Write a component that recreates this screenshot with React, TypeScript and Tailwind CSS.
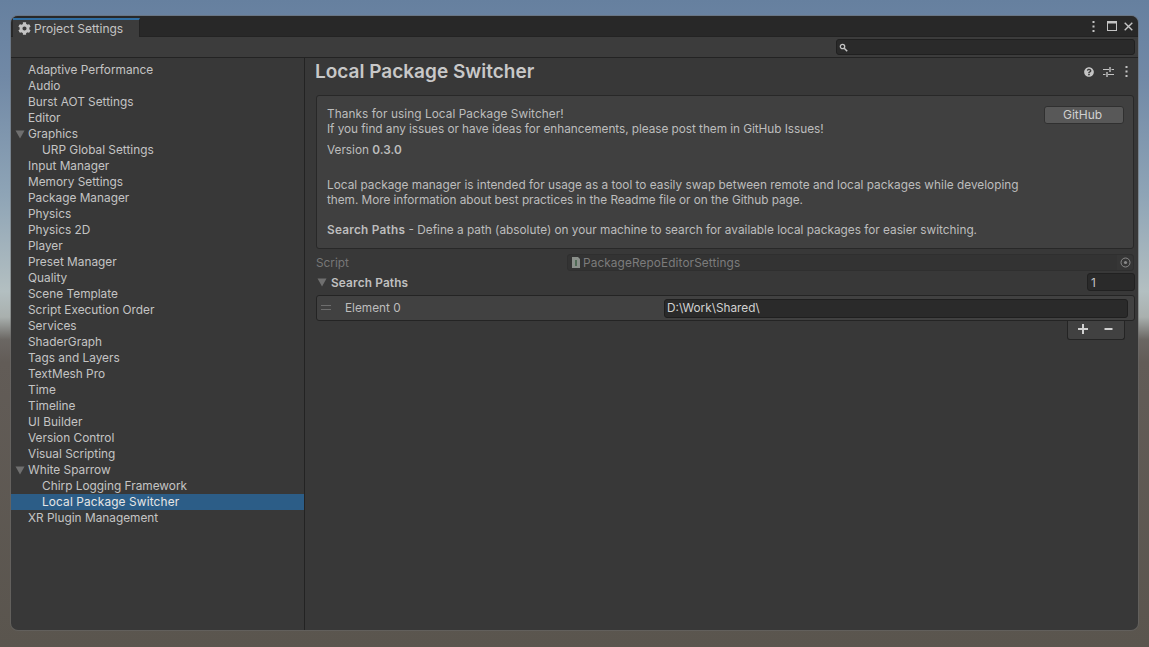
import { FaCog, FaQuestionCircle } from "react-icons/fa";

const font = "font-['Inter','Liberation_Sans',sans-serif]";

const settings: { label: string; level?: number; open?: boolean; selected?: boolean }[] = [
  { label: "Adaptive Performance" },
  { label: "Audio" },
  { label: "Burst AOT Settings" },
  { label: "Editor" },
  { label: "Graphics", open: true },
  { label: "URP Global Settings", level: 1 },
  { label: "Input Manager" },
  { label: "Memory Settings" },
  { label: "Package Manager" },
  { label: "Physics" },
  { label: "Physics 2D" },
  { label: "Player" },
  { label: "Preset Manager" },
  { label: "Quality" },
  { label: "Scene Template" },
  { label: "Script Execution Order" },
  { label: "Services" },
  { label: "ShaderGraph" },
  { label: "Tags and Layers" },
  { label: "TextMesh Pro" },
  { label: "Time" },
  { label: "Timeline" },
  { label: "UI Builder" },
  { label: "Version Control" },
  { label: "Visual Scripting" },
  { label: "White Sparrow", open: true },
  { label: "Chirp Logging Framework", level: 1 },
  { label: "Local Package Switcher", level: 1, selected: true },
  { label: "XR Plugin Management" },
];

function Triangle({ className }: { className?: string }) {
  return (
    <svg width="10" height="9" viewBox="0 0 10 9" className={className}>
      <polygon points="0.5,0.5 9.5,0.5 5,8.5" fill="#6f6f6f" />
    </svg>
  );
}

function Kebab() {
  return (
    <svg width="3" height="11" viewBox="0 0 3 11">
      <rect x="0.5" y="0" width="2" height="2" fill="#c4c4c4" />
      <rect x="0.5" y="4.5" width="2" height="2" fill="#c4c4c4" />
      <rect x="0.5" y="9" width="2" height="2" fill="#c4c4c4" />
    </svg>
  );
}

function TreeRow({ label, level, open, selected }: (typeof settings)[number]) {
  return (
    <div
      className={`flex h-4 items-center text-[11.85px] ${selected ? "bg-[#2c5d87] tracking-[0.14px] text-[#e6e6e6]" : "text-[#c4c4c4]"} ${level ? "pl-[31px]" : "pl-[17px]"}`}
    >
      {open && <Triangle className="absolute left-[4px] top-[4px]" />}
      <span>{label}</span>
    </div>
  );
}

export default function App() {
  return (
    <div className={`${font} h-[647px] w-[1149px] overflow-hidden bg-[linear-gradient(180deg,#66809f_0%,#7189a6_12%,#8ea4b6_30%,#b3bfc1_45%,#a9b0ae_49%,#6b6763_52.5%,#625c57_56%,#5a554e_100%)] pl-[11px] pt-[16px] text-[11.8px] leading-[15px] antialiased`}>
      <div className="flex h-[614px] w-[1127px] flex-col overflow-hidden rounded-[7px] bg-[#383838] ring-1 ring-[#6a6a6a]/50">
        {/* tab bar */}
        <div className="flex h-[21px] shrink-0 items-stretch border-b border-[#232323] bg-[#282828]">
          <div className="mb-[-1px] ml-[2px] mt-[2px] flex w-[127px] items-center gap-[3px] border-r border-[#232323] border-t-2 border-t-[#2f6ea3] bg-[#3c3c3c] pl-[5px] text-[#c4c4c4]">
            <FaCog className="h-[13px] w-[13px] text-[#c4c4c4]" />
            <span className="text-[12px]">Project Settings</span>
          </div>
          <div className="ml-auto flex items-center pr-[5px] text-[#c4c4c4]">
            <Kebab />
            <svg width="10" height="10" viewBox="0 0 10 10" fill="none" className="ml-[12px]">
              <rect x="0.5" y="0.5" width="9" height="9" stroke="#c4c4c4" />
              <rect x="0" y="0" width="10" height="2.5" fill="#c4c4c4" />
            </svg>
            <svg width="9" height="9" viewBox="0 0 9 9" fill="none" stroke="#c4c4c4" strokeWidth="1.4" className="ml-[7px]">
              <path d="M0.7 0.7l7.6 7.6M8.3 0.7l-7.6 7.6" />
            </svg>
          </div>
        </div>

        {/* toolbar */}
        <div className="flex h-[21px] shrink-0 items-center justify-end border-b border-[#232323] bg-[#3c3c3c] pr-[3px]">
          <div className="flex h-[16px] w-[299px] items-center rounded-[3px] border border-[#202020] bg-[#2a2a2a] pl-[2px]">
            <svg width="9" height="9" viewBox="0 0 9 9" fill="none" stroke="#c4c4c4">
              <circle cx="3.5" cy="3.5" r="2.2" strokeWidth="1.3" />
              <path d="M5.2 5.2L8.2 8.2" strokeWidth="1.5" />
            </svg>
          </div>
        </div>

        <div className="flex min-h-0 flex-1">
          {/* settings tree */}
          <div className="w-[294px] shrink-0 border-r border-[#232323] pt-[4px]">
            {settings.map((item) => (
              <div key={item.label} className="relative">
                <TreeRow {...item} />
              </div>
            ))}
          </div>

          {/* inspector */}
          <div className="min-w-0 flex-1 text-[#c4c4c4]">
            <div className="flex h-[37px] items-center justify-between pb-[12px] pl-[10px] pr-[10px] pt-[2px]">
              <h1 className="text-[19px] font-semibold leading-[24px] text-[#c8c8c8]">Local Package Switcher</h1>
              <div className="flex items-center">
                <FaQuestionCircle className="h-[10px] w-[10px] text-[#c4c4c4]" />
                <svg width="11" height="10" viewBox="0 0 11 10" fill="none" stroke="#c4c4c4" className="ml-[9px]">
                  <path d="M0 2.5h6M8.5 2.5H11M0 7.5h2.5M5 7.5h6" />
                  <path d="M7 0v5M4 5v5" strokeWidth="1.4" />
                </svg>
                <span className="ml-[11px] flex">
                  <Kebab />
                </span>
              </div>
            </div>

            {/* help box */}
            <div className="ml-[11px] mr-[4px] flex h-[154px] justify-between rounded-[3px] border border-[#282828] bg-[#404040] pl-[10px] pr-[9px] pt-[11px] text-[#bdbdbd]">
              <div className="flex flex-col">
                <p className="tracking-[0.075px]">Thanks for using Local Package Switcher!</p>
                <p className="tracking-[-0.045px]">If you find any issues or have ideas for enhancements, please post them in GitHub Issues!</p>
                <p className="mt-[6px]">
                  Version <b className="font-semibold">0.3.0</b>
                </p>
                <p className="mt-[20px] tracking-[0.015px]">Local package manager is intended for usage as a tool to easily swap between remote and local packages while developing</p>
                <p className="tracking-[-0.035px]">them. More information about best practices in the Readme file or on the Github page.</p>
                <p className="mt-[15px]">
                  <b className="font-semibold tracking-[0.25px]">Search Paths</b> - Define a path (absolute) on your machine to search for available local packages for easier switching.
                </p>
              </div>
              <button className="mt-[-1px] h-[18px] w-[80px] rounded-[3px] border border-[#303030] bg-[#585858] pr-[3px] text-[12px] leading-[16px] text-[#d0d0d0]">GitHub</button>
            </div>

            {/* script field */}
            <div className="ml-[11px] mr-[4px] mt-[5px] flex h-[17px] items-center">
              <span className="w-[251px] pt-[2px] text-[#777777]">Script</span>
              <div className="flex h-[17px] flex-1 items-center rounded-[3px] border border-[#2f2f2f] bg-[#333333] pl-[3px] text-[#7c7c7c]">
                <svg width="10" height="11" viewBox="0 0 10 11" className="mr-[2px] shrink-0">
                  <path d="M1 0h6l2 2v9H1z" fill="#8a8f8a" />
                  <rect x="4" y="3" width="2" height="6" fill="#4f6a55" />
                </svg>
                <span className="pt-[2px] tracking-[0.12px]">PackageRepoEditorSettings</span>
                <span className="ml-auto flex h-full w-[16px] items-center justify-center rounded-r-[3px] bg-[#363636]">
                  <svg width="11" height="11" viewBox="0 0 11 11" fill="none">
                    <circle cx="5.5" cy="5.5" r="4.5" stroke="#8a8a8a" />
                    <circle cx="5.5" cy="5.5" r="1.6" fill="#8a8a8a" />
                  </svg>
                </span>
              </div>
            </div>

            {/* search paths list */}
            <div className="ml-[11px] mr-[3px] mt-[2px] flex h-[18px] items-center">
              <Triangle className="ml-[1px] mr-[4px]" />
              <b className="pt-[2px] font-semibold tracking-[0.17px] text-[#c0c0c0]">Search Paths</b>
              <div className="ml-auto h-[18px] w-[48px] rounded-[3px] border border-[#212121] bg-[#2a2a2a] pl-[3px] leading-[18px] text-[#c4c4c4]">1</div>
            </div>
            <div className="ml-[11px] mr-[3px] mt-[4px] flex h-[26px] items-center rounded-[3px] border border-[#242424] bg-[#414141] pr-[6px]">
              <span className="mb-[2px] ml-[4px] flex h-[5px] w-[10px] flex-col justify-between border-y border-[#6e6e6e]" />
              <span className="ml-[14px] w-[319px] text-[#bdbdbd]">Element 0</span>
              <div className="flex h-[19px] flex-1 items-center rounded-[3px] border border-[#1f1f1f] bg-[#2a2a2a] pl-[2px] text-[#d2d2d2]">D:\Work\Shared\</div>
            </div>
            <div className="mr-[13px] flex justify-end">
              <div className="flex h-[19px] w-[58px] items-center justify-between rounded-b-[3px] border-x border-b border-[#242424] bg-[#414141] pb-[2px] pl-[10px] pr-[11px]">
                <svg width="10" height="10" viewBox="0 0 10 10" fill="#d0d0d0">
                  <rect x="4" y="0" width="2" height="10" />
                  <rect x="0" y="4" width="10" height="2" />
                </svg>
                <svg width="9" height="10" viewBox="0 0 9 10" fill="#d0d0d0">
                  <rect x="0.5" y="4" width="8" height="2" />
                </svg>
              </div>
            </div>
          </div>
        </div>
      </div>
    </div>
  );
}
